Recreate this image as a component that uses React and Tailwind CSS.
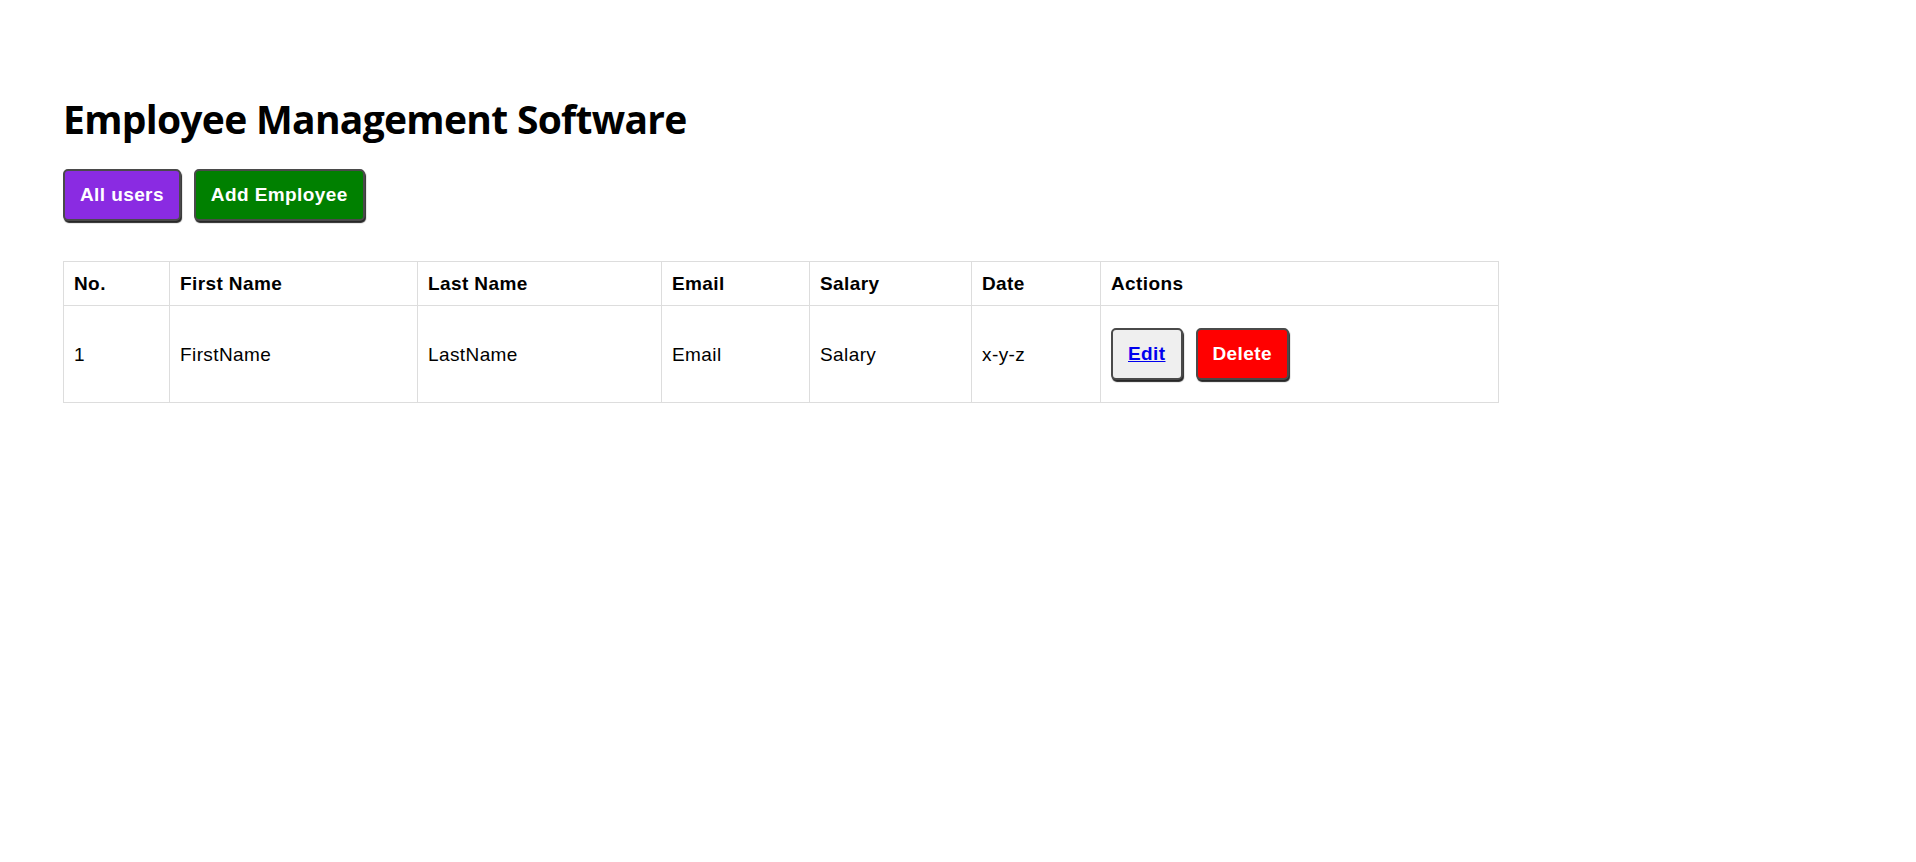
import React from "react";

const btn =
  "h-[52px] px-[15px] border-2 border-[#4a4a4a] rounded-[5px] shadow-[1px_2px_1px_rgba(0,0,0,0.85)] text-[19px] font-bold tracking-[0.4px]";

export default function App() {
  const cell = "border border-[#dddddd] px-[10px] py-[11px] text-left align-middle tracking-[0.4px]";
  return (
    <div className="min-h-[862px] bg-white pl-[63px] pt-[95px] text-black" style={{ fontFamily: '"Liberation Sans", Arial, sans-serif' }}>
      <h1 className="text-[39px] font-bold leading-[47px] m-0" style={{ fontFamily: '"Open Sans", "Noto Sans", sans-serif', letterSpacing: "-0.7px" }}>
        Employee Management Software
      </h1>
      <div className="flex gap-[13px] mt-[27px]">
        <button className={`${btn} bg-[#8a2be2] text-white`}>All users</button>
        <button className={`${btn} bg-[#008000] text-white`}>Add Employee</button>
      </div>
      <table className="mt-[40px] border-collapse table-fixed w-[1435px] text-[19px]">
        <colgroup>
          <col className="w-[106px]" />
          <col className="w-[248px]" />
          <col className="w-[244px]" />
          <col className="w-[148px]" />
          <col className="w-[162px]" />
          <col className="w-[129px]" />
          <col className="w-[398px]" />
        </colgroup>
        <thead>
          <tr>
            {["No.", "First Name", "Last Name", "Email", "Salary", "Date", "Actions"].map((h) => (
              <th key={h} className={`${cell} font-bold leading-[21px]`}>{h}</th>
            ))}
          </tr>
        </thead>
        <tbody>
          <tr>
            {["1", "FirstName", "LastName", "Email", "Salary", "x-y-z"].map((t, i) => (
              <td key={i} className={`${cell} leading-[21px]`}>{t}</td>
            ))}
            <td className={`${cell} py-[22px]`}>
              <div className="flex gap-[13px]">
                <button className={`${btn} bg-[#efefef] text-[#0000ee] underline`}>Edit</button>
                <button className={`${btn} bg-[#ff0000] text-white`}>Delete</button>
              </div>
            </td>
          </tr>
        </tbody>
      </table>
    </div>
  );
}
